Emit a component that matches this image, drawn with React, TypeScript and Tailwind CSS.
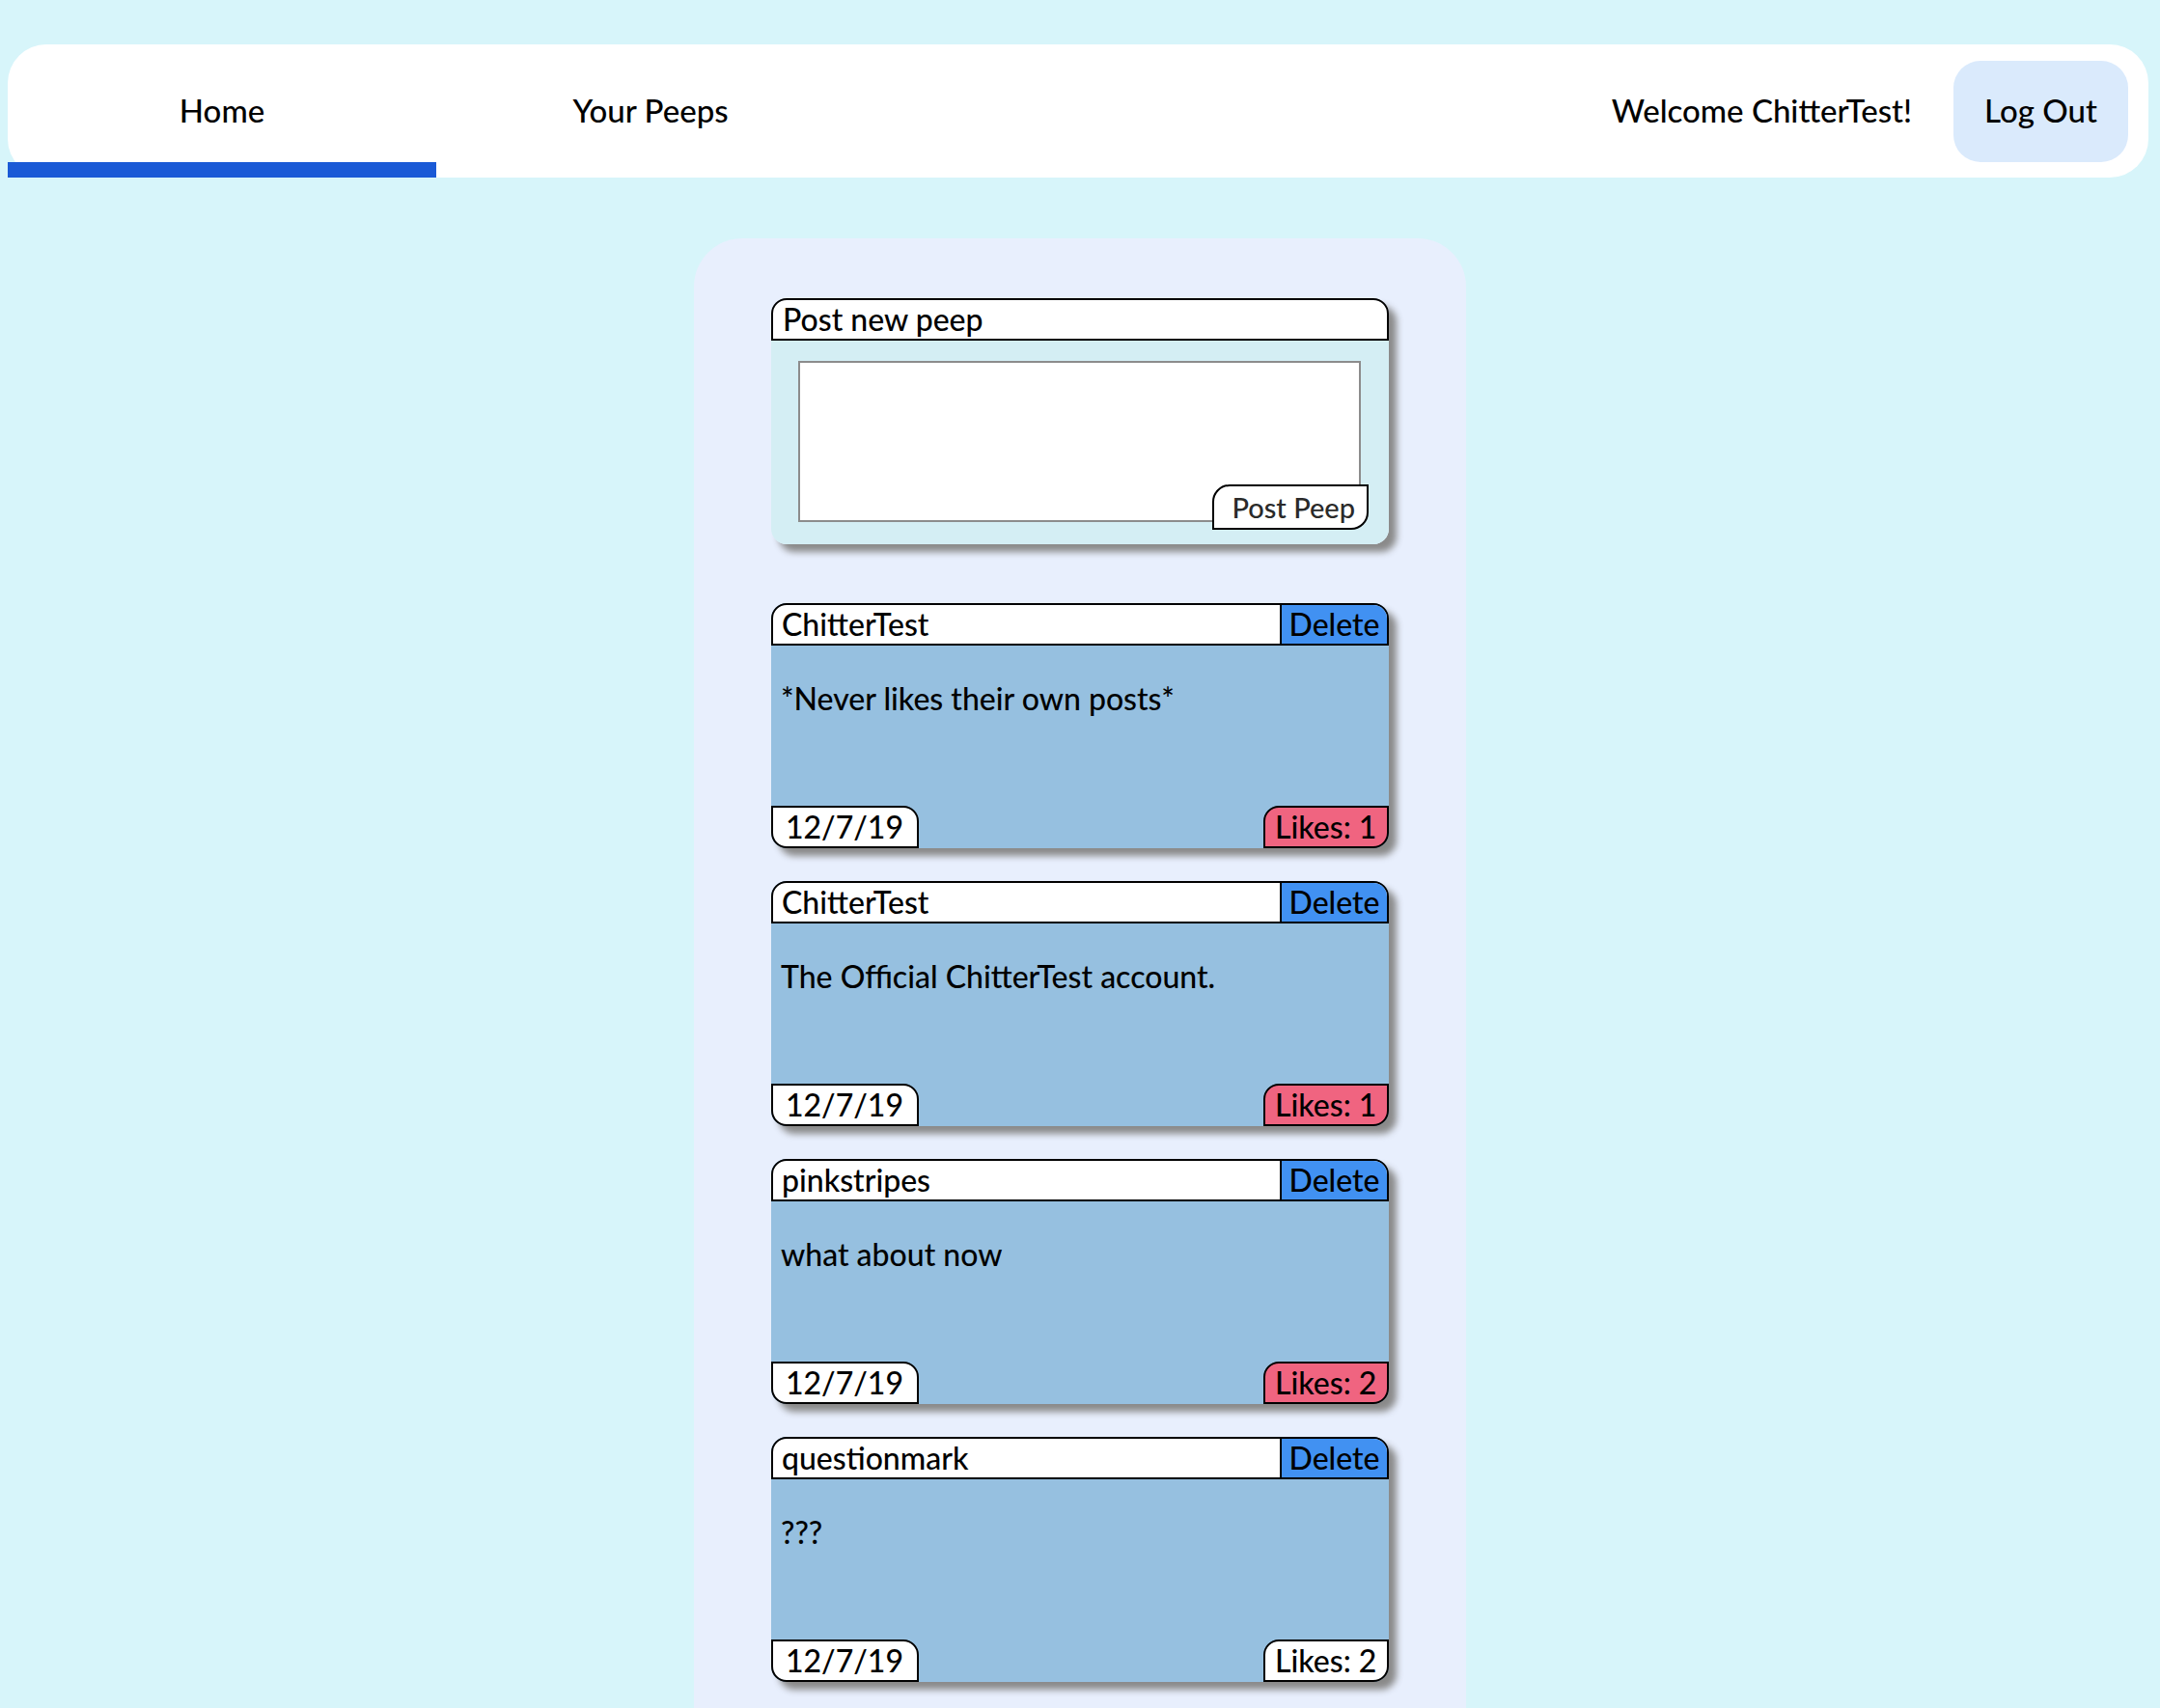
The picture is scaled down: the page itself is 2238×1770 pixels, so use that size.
import React from "react";

type Peep = { user: string; text: string; date: string; likes: number; liked: boolean };

const peeps: Peep[] = [
  { user: "ChitterTest", text: "*Never likes their own posts*", date: "12/7/19", likes: 1, liked: true },
  { user: "ChitterTest", text: "The Official ChitterTest account.", date: "12/7/19", likes: 1, liked: true },
  { user: "pinkstripes", text: "what about now", date: "12/7/19", likes: 2, liked: true },
  { user: "questionmark", text: "???", date: "12/7/19", likes: 2, liked: false },
];

function PeepCard({ p }: { p: Peep }) {
  return (
    <div className="w-[640px] h-[254px] rounded-[16px] shadow-[8px_8px_7px_#8a8a8a] flex flex-col bg-[#96c0e0]">
      <div className="h-[44px] shrink-0 flex bg-white border-2 border-black rounded-t-[16px] overflow-hidden">
        <div className="flex-1 pl-[9px] text-[32px] leading-[40px] text-black whitespace-nowrap">{p.user}</div>
        <button className="w-[111px] h-full bg-[#4191f2] border-l-2 border-black text-[32px] leading-[40px] text-black text-center">
          Delete
        </button>
      </div>
      <div className="flex-1 flex flex-col">
        <div className="flex-1 pl-[10px] pt-[35px] text-[32px] leading-[40px] text-black">{p.text}</div>
        <div className="h-[44px] flex justify-between">
          <div className="w-[153px] h-[44px] bg-white border-2 border-black rounded-tr-[16px] rounded-bl-[16px] pl-[13px] text-[32px] leading-[40px] text-black">
            {p.date}
          </div>
          <button
            className={
              "w-[130px] h-[44px] border-2 border-black rounded-tl-[16px] rounded-br-[16px] pl-[10px] text-left text-[32px] leading-[40px] text-black " +
              (p.liked ? "bg-[#f06480]" : "bg-white")
            }
          >
            Likes: {p.likes}
          </button>
        </div>
      </div>
    </div>
  );
}

export default function App() {
  return (
    <div className="min-h-screen bg-[#d7f5fa] pt-[46px] font-['Lato',_'Noto_Sans',_sans-serif] font-medium text-black">
      <nav className="ml-[8px] mr-[12px] h-[138px] bg-white rounded-[40px] flex items-center">
        <div className="relative w-[444px] h-full flex items-center justify-center text-[33px]">
          Home
          <div className="absolute left-0 bottom-0 w-full h-[16px] bg-[#1a5ad6]" />
        </div>
        <div className="w-[444px] h-full flex items-center justify-center text-[33px]">Your Peeps</div>
        <div className="ml-auto text-[33px]">Welcome ChitterTest!</div>
        <button className="ml-[43px] mr-[21px] w-[181px] h-[105px] rounded-[28px] bg-[#daeafc] text-[33px]">
          Log Out
        </button>
      </nav>

      <main className="mx-auto mt-[63px] w-[800px] bg-[#e8effd] rounded-[50px] px-[80px] pt-[62px] pb-[80px] flex flex-col">
        <div className="w-[640px] rounded-[16px] shadow-[8px_8px_7px_#8a8a8a]">
          <div className="h-[44px] bg-white border-2 border-black rounded-t-[16px] pl-[10px] text-[32px] leading-[40px]">
            Post new peep
          </div>
          <div className="relative h-[211px] bg-[#d4eef4] rounded-b-[16px] pt-[21px] pl-[28px]">
            <textarea className="block w-[583px] h-[167px] bg-white border-2 border-[#8c8c8c] resize-none outline-none" />
            <button className="absolute left-[457px] top-[149px] w-[162px] h-[47px] bg-white border-2 border-black rounded-tl-[18px] rounded-br-[18px] text-[29px] leading-[43px] text-[#2a2a2a] text-right pr-[12px]">
              Post Peep
            </button>
          </div>
        </div>

        <div className="mt-[61px] flex flex-col gap-[34px]">
          {peeps.map((p, i) => (
            <PeepCard key={i} p={p} />
          ))}
        </div>
      </main>
    </div>
  );
}
